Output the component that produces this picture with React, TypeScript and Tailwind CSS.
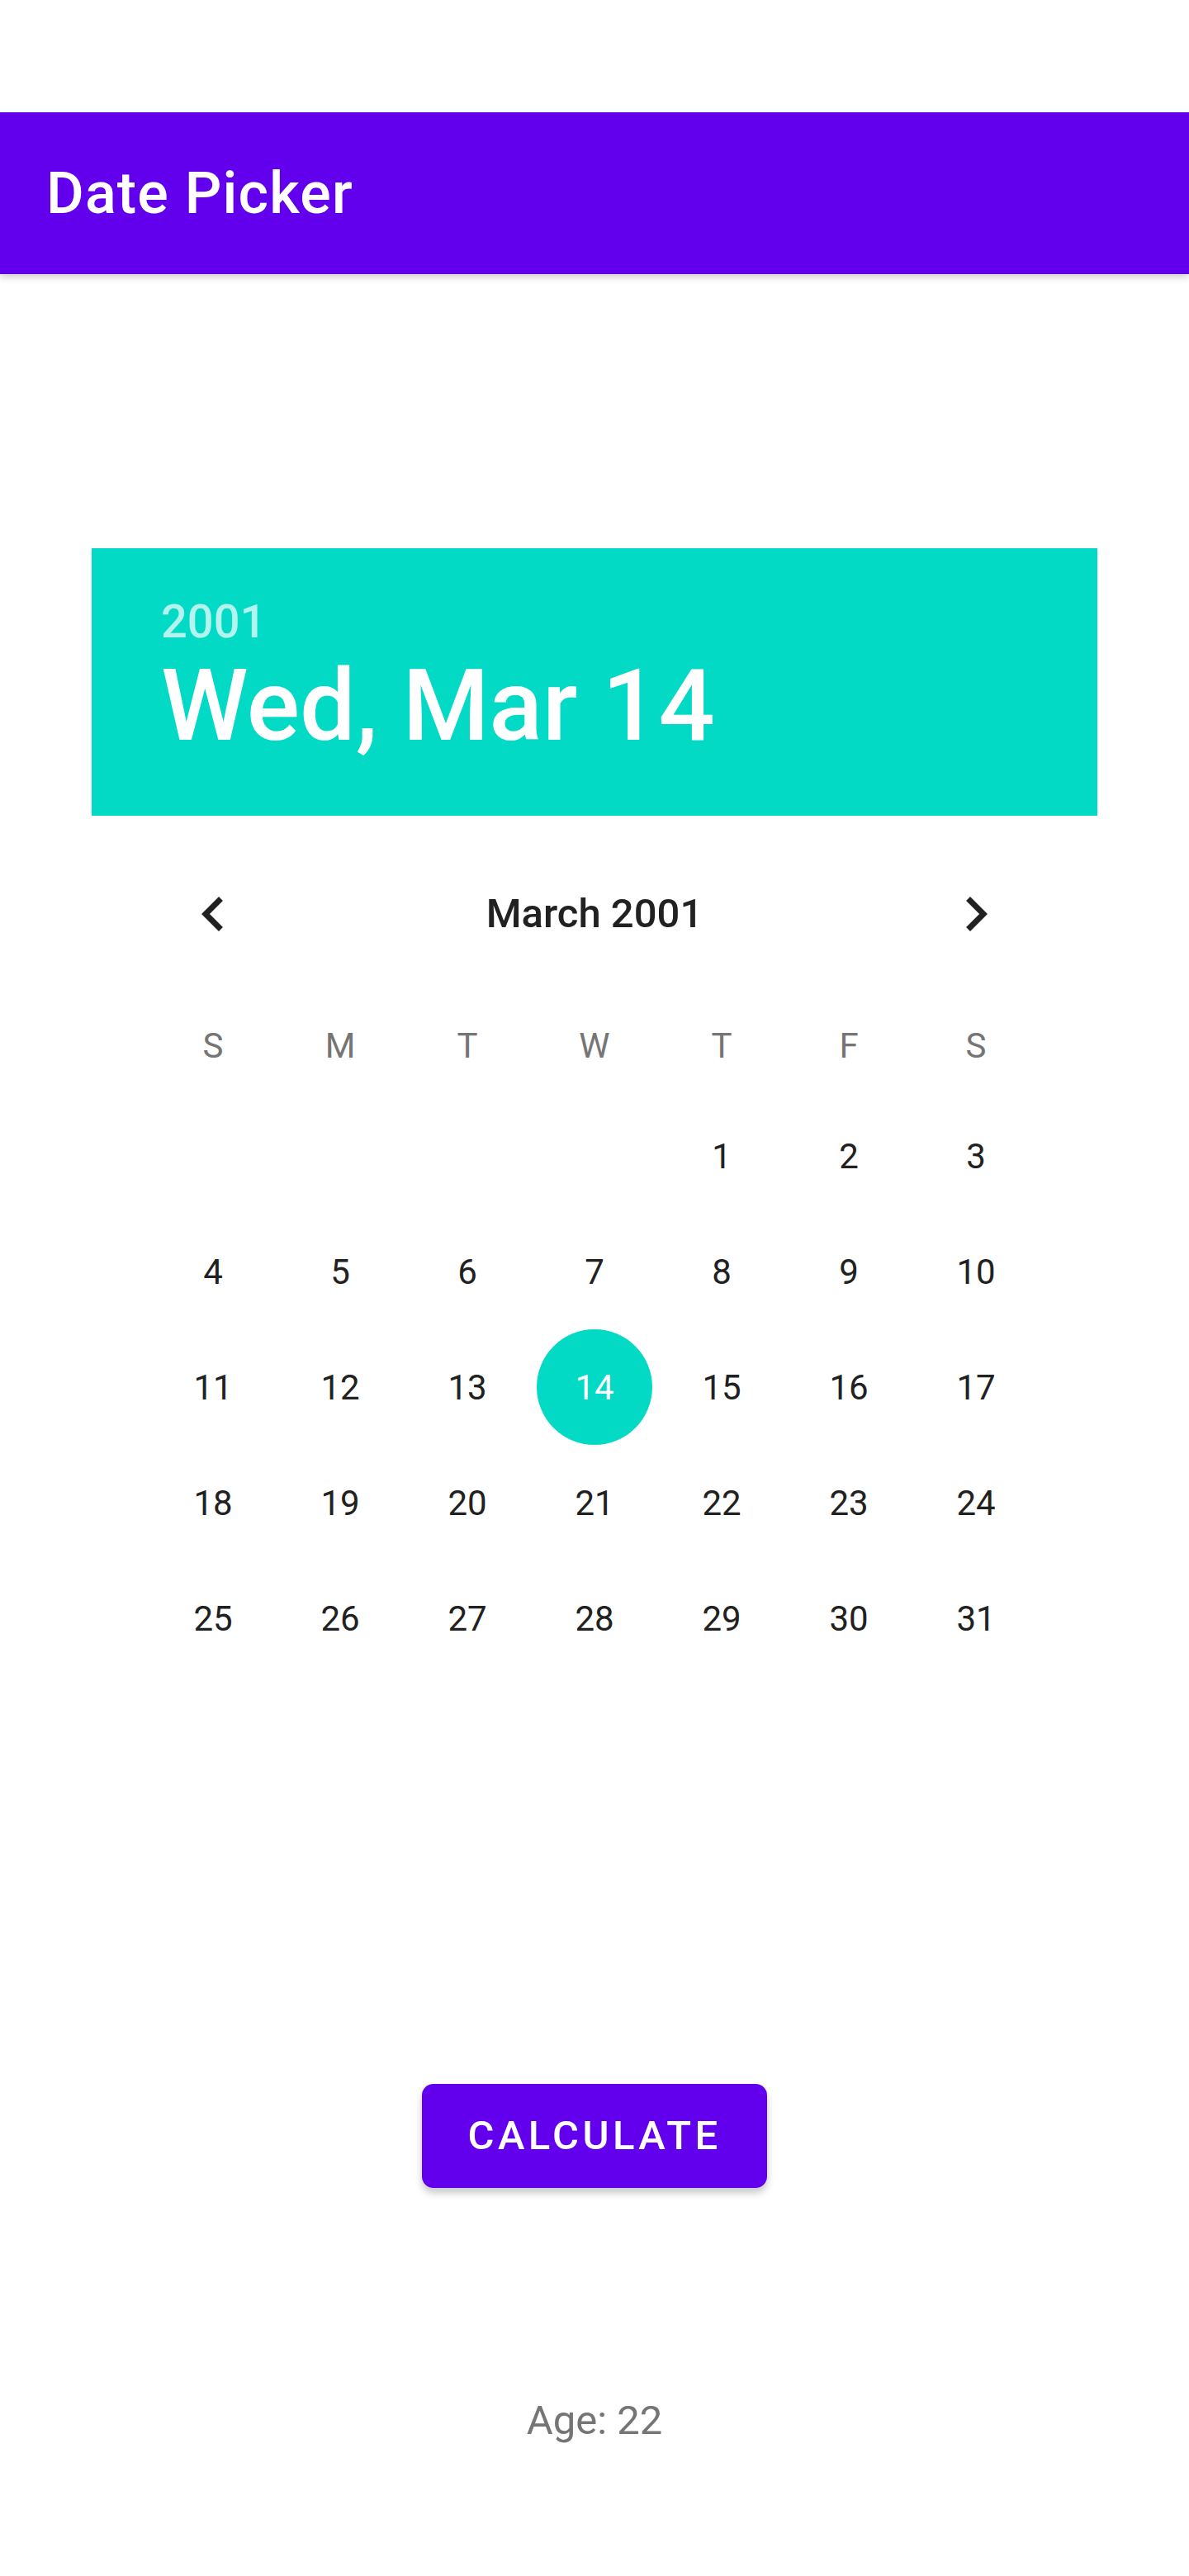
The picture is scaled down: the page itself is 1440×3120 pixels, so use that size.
import React from 'react';

const WEEKDAYS = ['S', 'M', 'T', 'W', 'T', 'F', 'S'];

// March 2001 starts on a Thursday
const FIRST_WEEKDAY = 4;
const DAYS_IN_MONTH = 31;
const SELECTED_DAY = 14;

function buildWeeks(): (number | null)[][] {
  const cells: (number | null)[] = [];
  for (let i = 0; i < FIRST_WEEKDAY; i += 1) cells.push(null);
  for (let day = 1; day <= DAYS_IN_MONTH; day += 1) cells.push(day);
  while (cells.length % 7 !== 0) cells.push(null);

  const weeks: (number | null)[][] = [];
  for (let i = 0; i < cells.length; i += 7) {
    weeks.push(cells.slice(i, i + 7));
  }
  return weeks;
}

function ChevronLeft() {
  return (
    <svg width="84" height="84" viewBox="0 0 24 24" fill="#212121">
      <path d="M15.41 7.41L14 6l-6 6 6 6 1.41-1.41L10.83 12z" />
    </svg>
  );
}

function ChevronRight() {
  return (
    <svg width="84" height="84" viewBox="0 0 24 24" fill="#212121">
      <path d="M10 6L8.59 7.41 13.17 12l-4.58 4.59L10 18l6-6z" />
    </svg>
  );
}

export default function App() {
  const weeks = buildWeeks();

  return (
    <div className="min-h-[3120px] bg-white font-['Roboto',sans-serif]">
      <div className="h-[136px] bg-white" />

      <header className="relative z-10 flex h-[196px] items-center bg-[#6200ee] pl-[56px] shadow-[0_4px_8px_rgba(0,0,0,0.18)]">
        <h1 className="text-[70px] leading-none font-medium tracking-[1.2px] text-white">
          Date Picker
        </h1>
      </header>

      <div className="mx-auto mt-[332px] w-[1218px]">
        <div className="h-[324px] bg-[#03dac5] pl-[84px] pt-[61px]">
          <div className="text-[56px] leading-[56px] font-medium text-[#b3f4ee]">
            2001
          </div>
          <div className="mt-[14px] text-[120px] leading-[120px] font-medium text-white">
            Wed, Mar 14
          </div>
        </div>

        <div className="mx-auto w-[1078px]">
          <div className="mt-[49px] flex h-[140px] items-center justify-between">
            <button
              type="button"
              className="flex h-[140px] w-[154px] items-center justify-center"
            >
              <ChevronLeft />
            </button>
            <span className="text-[49px] font-medium text-[#212121]">
              March 2001
            </span>
            <button
              type="button"
              className="flex h-[140px] w-[154px] items-center justify-center"
            >
              <ChevronRight />
            </button>
          </div>

          <div className="mt-[30px] grid h-[120px] grid-cols-7 items-center">
            {WEEKDAYS.map((label, index) => (
              <span
                key={index}
                className="text-center text-[42px] leading-[120px] text-[#757575]"
              >
                {label}
              </span>
            ))}
          </div>

          <div className="mt-[3px]">
            {weeks.map((week, row) => (
              <div key={row} className="grid h-[140px] grid-cols-7">
                {week.map((day, col) => (
                  <div
                    key={col}
                    className="flex h-[140px] items-center justify-center"
                  >
                    {day !== null &&
                      (day === SELECTED_DAY ? (
                        <span className="flex h-[140px] w-[140px] items-center justify-center rounded-full bg-[#03dac5] text-[42px] text-white">
                          {day}
                        </span>
                      ) : (
                        <span className="text-[42px] text-[#212121]">
                          {day}
                        </span>
                      ))}
                  </div>
                ))}
              </div>
            ))}
          </div>
        </div>
      </div>

      <div className="mt-[494px] flex justify-center">
        <button
          type="button"
          className="flex h-[126px] w-[418px] items-center justify-center rounded-[14px] bg-[#6200ee] text-[49px] font-medium tracking-[4.4px] text-white shadow-[0_6px_10px_rgba(0,0,0,0.22)]"
        >
          CALCULATE
        </button>
      </div>

      <p className="mt-[254px] text-center text-[49px] leading-[56px] text-[#757575]">
        Age: 22
      </p>
    </div>
  );
}
